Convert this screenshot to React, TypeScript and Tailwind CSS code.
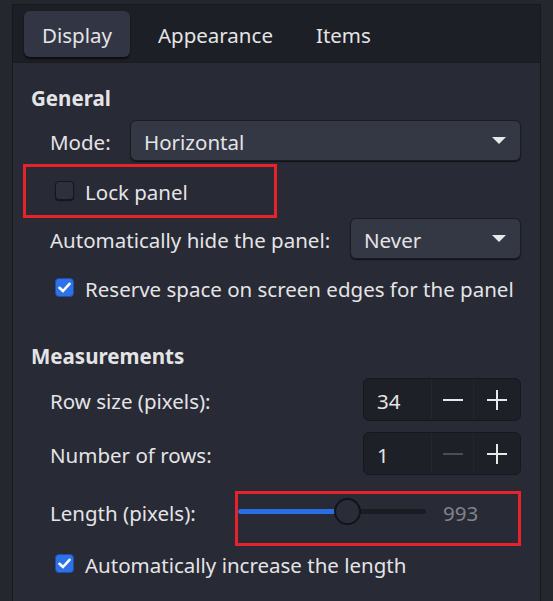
import React from 'react'

const font = { fontFamily: '"Noto Sans", sans-serif' }

const Arrow = () => (
  <svg width="14" height="7" viewBox="0 0 14 7" className="shrink-0">
    <path d="M0 0 L14 0 L7 7 Z" fill="#e8e8ea" />
  </svg>
)

const Combo = ({ value, className }: { value: string; className: string }) => (
  <div
    className={`flex items-center justify-between h-[41px] pl-[13px] pr-[14px] rounded-[6px] bg-[#343744] border border-[#1a1c22] shadow-[0_1px_1px_rgba(0,0,0,0.6)] ${className}`}
  >
    <span className="pt-[3px]">{value}</span>
    <Arrow />
  </div>
)

const Check = ({ checked }: { checked: boolean }) =>
  checked ? (
    <span className="flex items-center justify-center w-[19px] h-[19px] rounded-[4px] bg-[#2f72e8] border border-[#1c4fb0] shrink-0">
      <svg width="13" height="11" viewBox="0 0 13 11">
        <path d="M1.5 5.8 L5 9 L11.5 1.8" stroke="#fff" strokeWidth="2.6" fill="none" strokeLinecap="round" strokeLinejoin="round" />
      </svg>
    </span>
  ) : (
    <span className="w-[19px] h-[19px] rounded-[4px] bg-[#2e313d] border border-[#15171c] shadow-[0_1px_1px_rgba(0,0,0,0.5)] shrink-0" />
  )

const Spin = ({ value, minusDisabled }: { value: string; minusDisabled?: boolean }) => (
  <div className="flex h-[43px] w-[158px] rounded-[6px] bg-[#1e2027] border border-[#16181d] overflow-hidden">
    <div className="flex items-center pl-[13px] pt-[3px] w-[67px]">{value}</div>
    <div className="flex items-center justify-center w-[42px] border-l border-[#24262e]">
      <span className={`block w-[20px] h-[2px] ${minusDisabled ? 'bg-[#4a4d57]' : 'bg-[#e8e8ea]'}`} />
    </div>
    <div className="relative flex items-center justify-center flex-1 border-l border-[#24262e]">
      <span className="block w-[20px] h-[2px] bg-[#e8e8ea]" />
      <span className="absolute w-[2px] h-[20px] bg-[#e8e8ea]" />
    </div>
  </div>
)

const Row = ({ label, children, className = '' }: { label: string; children: React.ReactNode; className?: string }) => (
  <div className={`flex items-center justify-between pl-[19px] ${className}`}>
    <span className="pt-[3px]">{label}</span>
    {children}
  </div>
)

export default function App() {
  return (
    <div style={font} className="w-[553px] h-[601px] overflow-hidden bg-[#25272f] text-[20.5px] leading-[26px] text-[#e4e4e6] pl-[12px] pr-[12px] pt-[4px]">
      <div className="h-[620px] border border-[#17191e] bg-[#282a35] flex flex-col">
        {/* tabs */}
        <div className="flex items-center h-[58px] bg-[#1d1f26] border-b border-[#1a1c21] pl-[11px]">
          <div className="flex items-center h-[46px] px-[18px] pt-[3px] rounded-[6px] bg-[#323543] shadow-[0_2px_2px_rgba(0,0,0,0.6)]">Display</div>
          <div className="ml-[28px] pt-[3px]">Appearance</div>
          <div className="ml-[43px] pt-[3px]">Items</div>
        </div>

        {/* content */}
        <div className="pl-[18px] pr-[19px]">
          <div className="mt-[21px] h-[24px] pt-[3px] flex items-center font-bold">General</div>

          <Row label="Mode:" className="mt-[12px]">
            <Combo value="Horizontal" className="w-[391px]" />
          </Row>

          <div className="mt-[3px] -ml-[8px] w-[254px] h-[54px] border-[3px] border-[#e8222b] flex items-center gap-[11px] pl-[29px] pb-[2px]">
            <Check checked={false} />
            <span className="pt-[3px]">Lock panel</span>
          </div>

          <Row label="Automatically hide the panel:">
            <Combo value="Never" className="w-[171px]" />
          </Row>

          <div className="mt-[16px] h-[24px] flex items-center gap-[11px] pl-[24px]">
            <Check checked />
            <span className="pt-[3px]">Reserve space on screen edges for the panel</span>
          </div>

          <div className="mt-[43px] h-[24px] pt-[3px] flex items-center font-bold">Measurements</div>

          <Row label="Row size (pixels):" className="mt-[12px]">
            <Spin value="34" />
          </Row>

          <Row label="Number of rows:" className="mt-[11px]">
            <Spin value="1" minusDisabled />
          </Row>

          <div className="mt-[16px] flex items-start justify-between pl-[19px]">
            <span className="mt-[9px]">Length (pixels):</span>
            <div className="w-[286px] h-[55px] border-[3px] border-[#e8222b] flex items-center pb-[14px]">
              <div className="relative w-[188px] h-[5px] rounded-full bg-[#1a1c22]">
                <div className="absolute left-0 top-0 h-full w-[104px] rounded-full bg-[#2a6ee6]" />
                <div className="absolute left-[96px] top-[-11px] w-[27px] h-[27px] rounded-full bg-[#2a2d38] border-2 border-[#121318]" />
              </div>
              <span className="ml-[17px] pt-[3px] text-[#80838c]">993</span>
            </div>
          </div>

          <div className="mt-[5px] h-[24px] flex items-center gap-[11px] pl-[24px]">
            <Check checked />
            <span className="pt-[3px]">Automatically increase the length</span>
          </div>
        </div>
      </div>
    </div>
  )
}
